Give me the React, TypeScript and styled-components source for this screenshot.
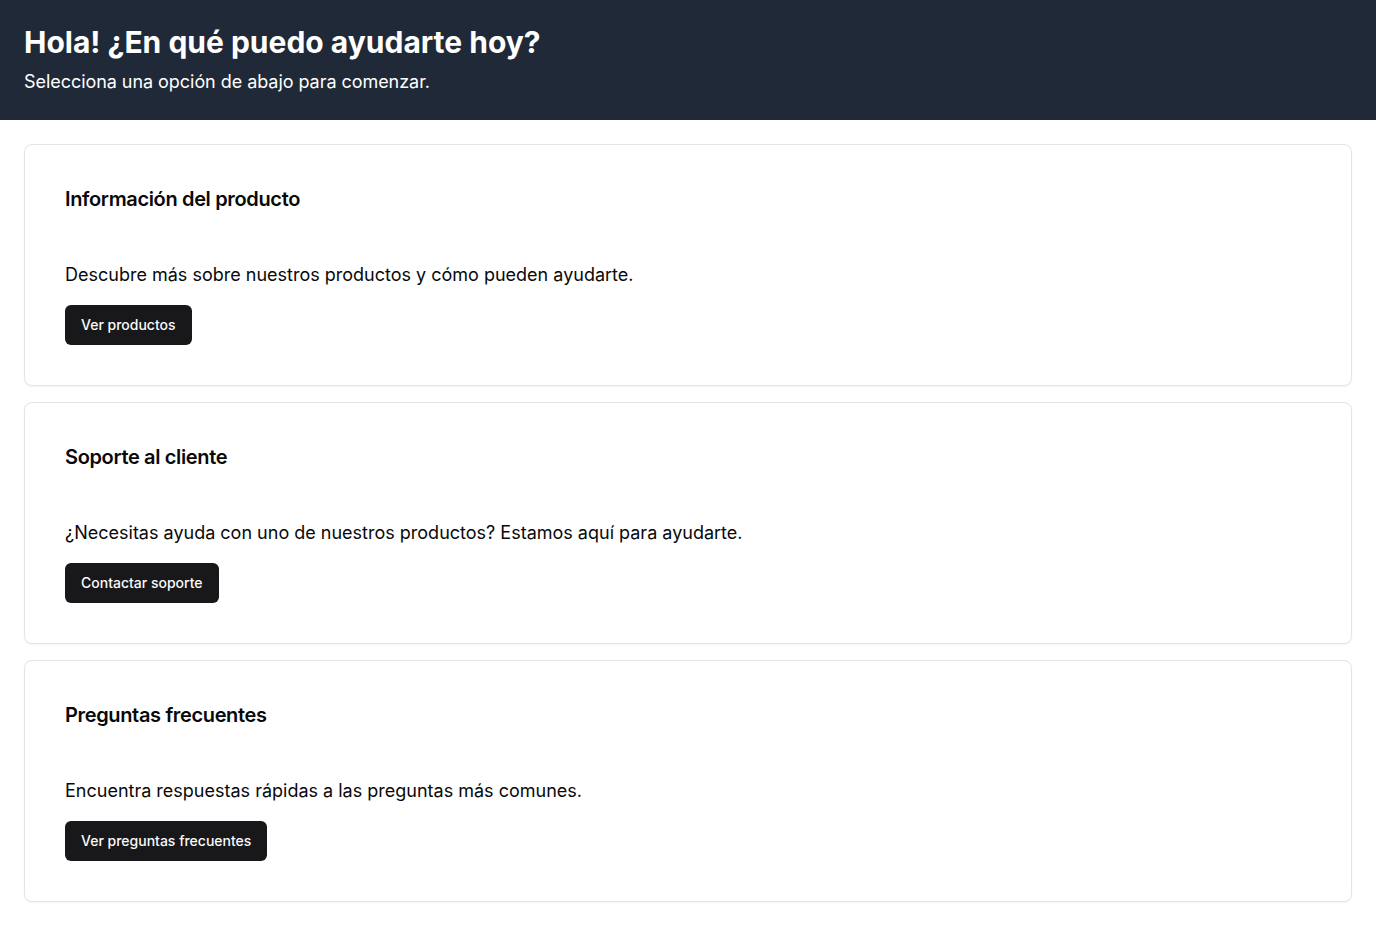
import React from "react";
import styled, { createGlobalStyle } from "styled-components";

const Global = createGlobalStyle`
  * { box-sizing: border-box; }
  body { margin: 0; font-family: Inter, "Noto Sans", sans-serif; background: #ffffff; color: #09090b; }
`;

const Header = styled.header`
  background: #1f2937;
  color: #ffffff;
  padding: 24px 24px 0;
  height: 120px;
`;

const Title = styled.h1`
  margin: 0;
  font-size: 30px;
  line-height: 36px;
  font-weight: 700;
`;

const Subtitle = styled.p`
  margin: 8px 0 0;
  font-size: 18px;
  line-height: 28px;
  font-weight: 400;
  letter-spacing: -0.05px;
`;

const Main = styled.main`
  display: flex;
  flex-direction: column;
  gap: 16px;
  padding: 24px;
`;

const Card = styled.section`
  border: 1px solid #e4e4e7;
  border-radius: 8px;
  box-shadow: 0 1px 2px rgba(0, 0, 0, 0.05);
  padding: 40px;
  background: #fff;
`;

const CardTitle = styled.h2`
  margin: 0;
  font-size: 20px;
  line-height: 28px;
  font-weight: 600;
  letter-spacing: -0.35px;
`;

const CardText = styled.p`
  margin: 50px 0 0;
  font-size: 18px;
  line-height: 24px;
`;

const Button = styled.button`
  margin-top: 18px;
  height: 40px;
  padding: 0 16px 1px;
  border: none;
  border-radius: 6px;
  background: #18181b;
  color: #fafafa;
  font-family: Inter, "Noto Sans", sans-serif;
  font-size: 14px;
  font-weight: 500;
  cursor: pointer;
`;

const items = [
  { title: "Información del producto", text: "Descubre más sobre nuestros productos y cómo pueden ayudarte.", cta: "Ver productos" },
  { title: "Soporte al cliente", text: "¿Necesitas ayuda con uno de nuestros productos? Estamos aquí para ayudarte.", cta: "Contactar soporte" },
  { title: "Preguntas frecuentes", text: "Encuentra respuestas rápidas a las preguntas más comunes.", cta: "Ver preguntas frecuentes" },
];

export default function App() {
  return (
    <>
      <Global />
      <Header>
        <Title>Hola! ¿En qué puedo ayudarte hoy?</Title>
        <Subtitle>Selecciona una opción de abajo para comenzar.</Subtitle>
      </Header>
      <Main>
        {items.map((it) => (
          <Card key={it.title}>
            <CardTitle>{it.title}</CardTitle>
            <CardText>{it.text}</CardText>
            <Button>{it.cta}</Button>
          </Card>
        ))}
      </Main>
    </>
  );
}
